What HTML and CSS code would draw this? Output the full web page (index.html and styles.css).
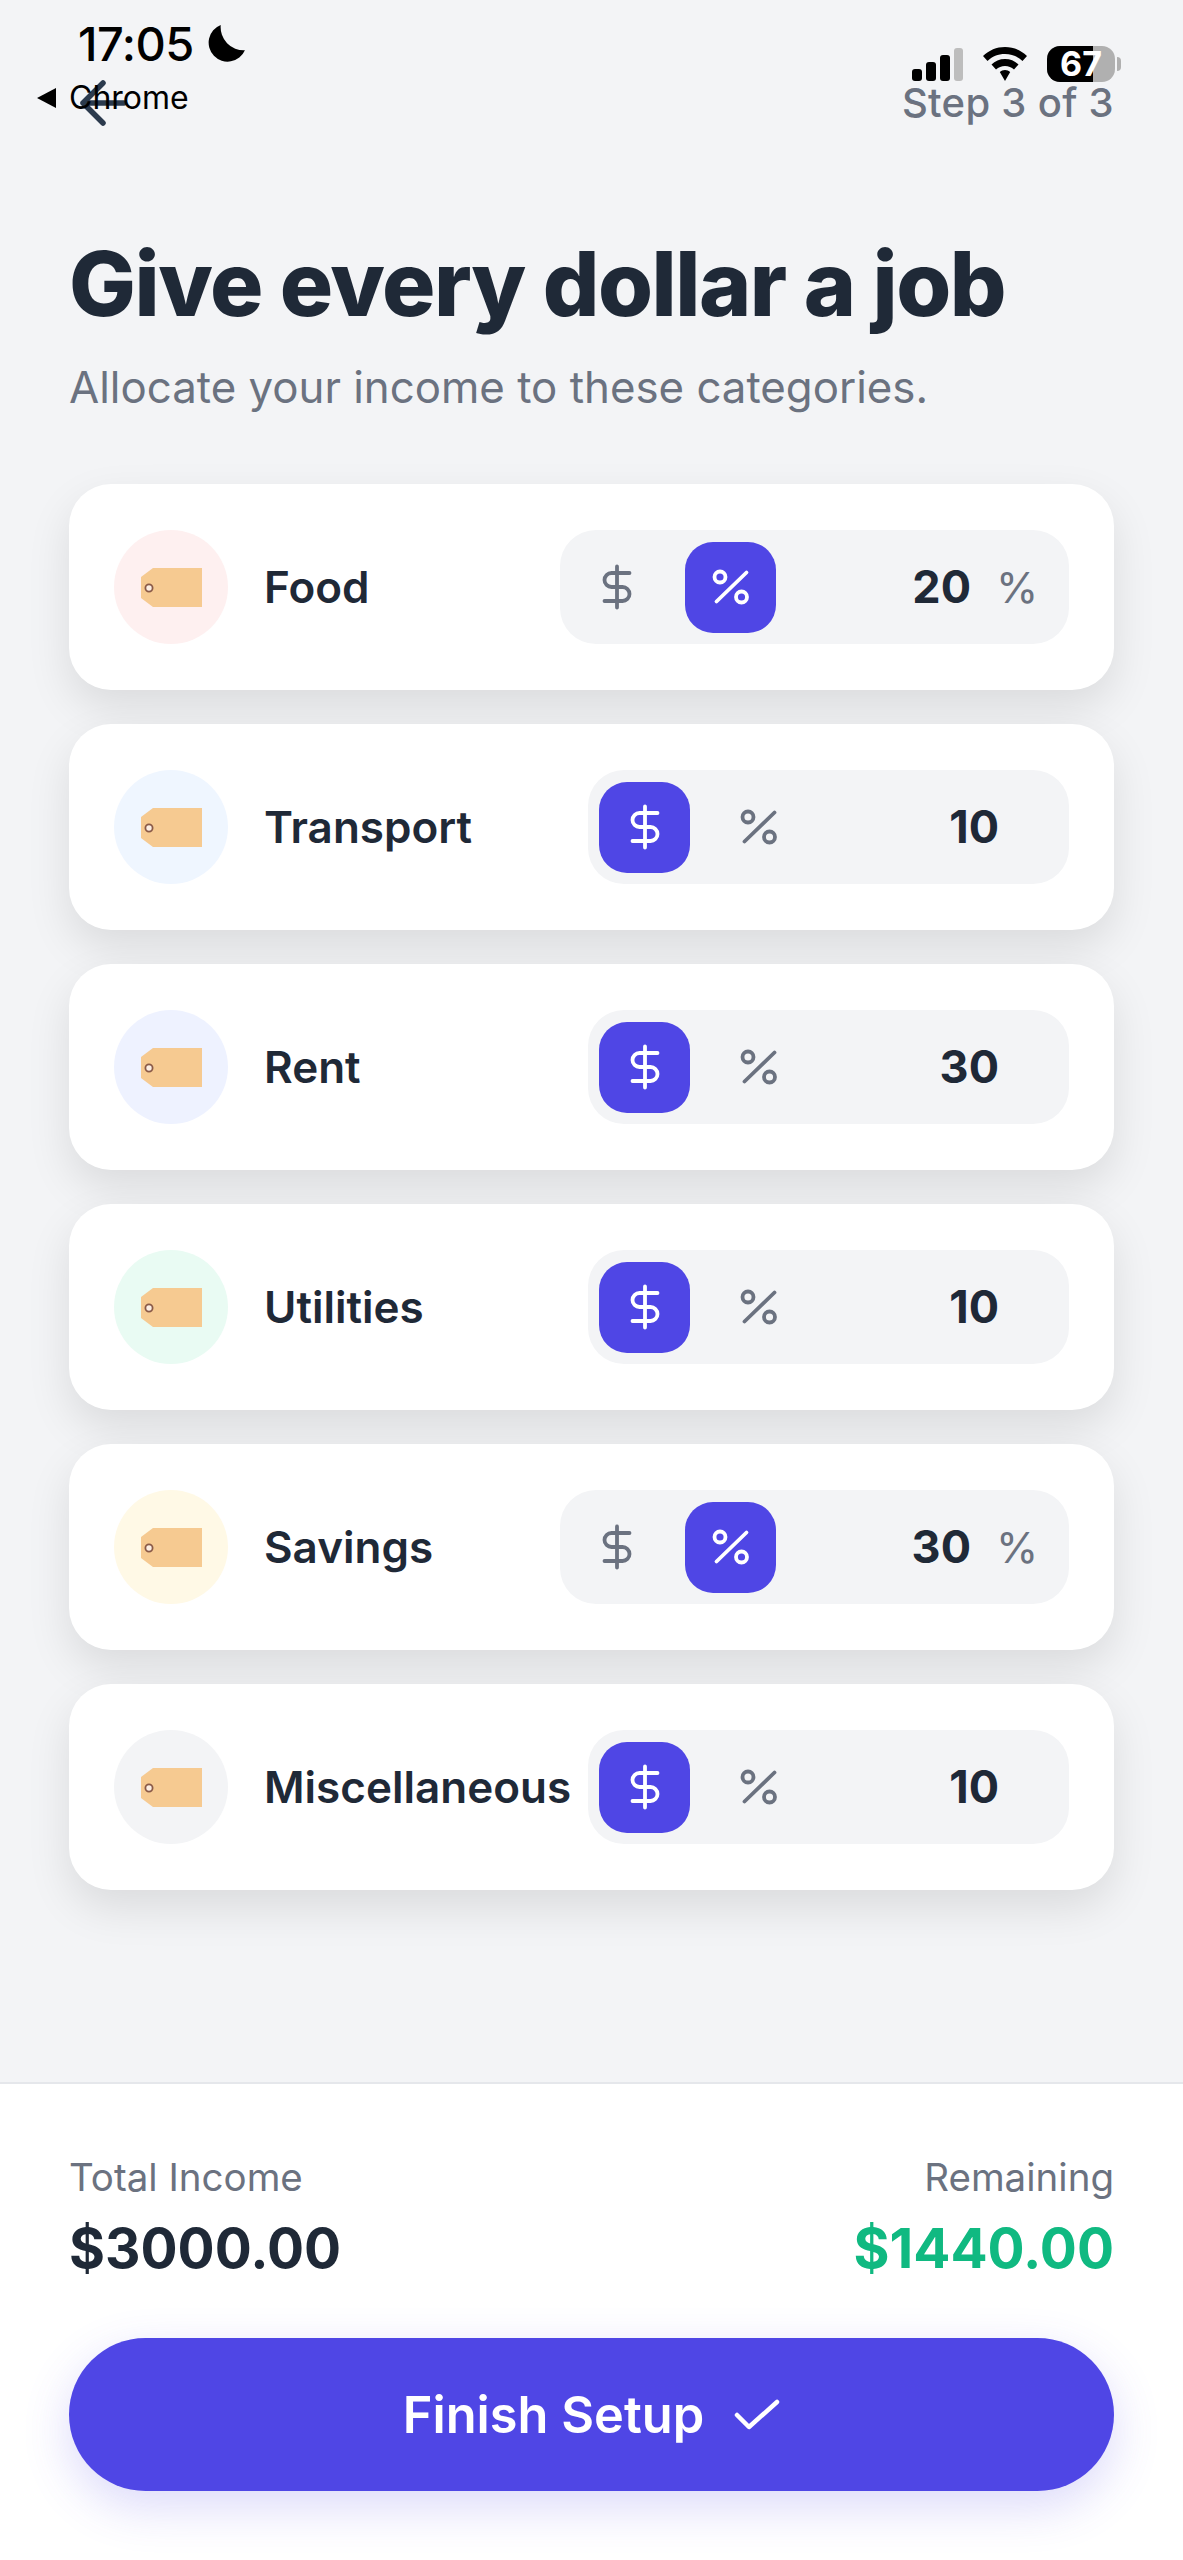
FILE: index.html
```html
<!DOCTYPE html>
<html lang="en">
<head>
<meta charset="utf-8">
<title>Give every dollar a job</title>
<link rel="stylesheet" href="styles.css">
</head>
<body>
<svg class="sprite" width="0" height="0" aria-hidden="true">
  <symbol id="i-dollar" viewBox="0 0 48 48"><path d="M24 3.500V44.500M36.500 10H18.500a7 7 0 0 0 0 14H29.500a7 7 0 0 1 0 14H11.500"/></symbol>
  <symbol id="i-percent" viewBox="0 0 48 48"><path d="M39.500 9.500L9.500 38.500"/><circle cx="13" cy="14" r="5.500"/><circle cx="34.500" cy="34" r="5.500"/></symbol>
  <symbol id="i-tag" viewBox="0 0 61 39"><path class="tag-body" d="M12 0H61V39H12L0 30V9Z"/><circle class="tag-hole" cx="8" cy="20" r="3.600"/></symbol>
</svg>
<div class="page">
  <div class="statusbar">
    <div class="status-left">
      <div class="clock"><span class="time">17:05</span>
        <svg class="moon" viewBox="0 0 38 38"><path d="M14 1A18 18 0 1 0 37 25A22 22 0 0 1 14 1Z"/></svg>
      </div>
      <div class="return"><span class="tri"></span><span class="return-label">Chrome</span></div>
    </div>
    <div class="status-right">
      <svg class="signal" viewBox="0 0 51 33"><rect x="0" y="21" width="10" height="12" rx="3"/><rect x="14" y="14" width="10" height="19" rx="3"/><rect x="28" y="7" width="10" height="26" rx="3"/><rect class="dim" x="42" y="0" width="9" height="33" rx="3"/></svg>
      <svg class="wifi" viewBox="0 0 44 34"><path d="M22 0C13.500 0 6 3.300 0 9L4.500 14C9 9.500 15 7 22 7S35 9.500 39.500 14L44 9C38 3.300 30.500 0 22 0ZM22 12C16.500 12 12 14 8.500 17.500L13 22.500C15.500 20.200 18.500 19 22 19S28.500 20.200 31 22.500L35.500 17.500C32 14 27.500 12 22 12ZM22 23C20 23 18.200 23.700 16.800 25L22 34L27.200 25C25.800 23.700 24 23 22 23Z"/></svg>
      <div class="battery"><span class="battery-level"></span><span class="battery-num">67</span></div>
    </div>
  </div>

  <main class="content">
    <header class="topbar">
      <svg class="back" viewBox="0 0 50 46"><path d="M46 23H5M25 3L5 23L25 43"/></svg>
      <span class="step">Step 3 of 3</span>
    </header>
    <h1 class="title">Give every dollar a job</h1>
    <p class="subtitle">Allocate your income to these categories.</p>

    <div class="list">
      <section class="card">
        <div class="circle red"><svg class="tag"><use href="#i-tag"/></svg></div>
        <div class="name">Food</div>
        <div class="pill has-suffix">
          <div class="seg"><svg class="glyph"><use href="#i-dollar"/></svg></div>
          <div class="seg on"><svg class="glyph"><use href="#i-percent"/></svg></div>
          <div class="value">20</div>
          <div class="suffix">%</div>
        </div>
      </section>
      <section class="card">
        <div class="circle blue"><svg class="tag"><use href="#i-tag"/></svg></div>
        <div class="name">Transport</div>
        <div class="pill">
          <div class="seg on"><svg class="glyph"><use href="#i-dollar"/></svg></div>
          <div class="seg"><svg class="glyph"><use href="#i-percent"/></svg></div>
          <div class="value">10</div>
        </div>
      </section>
      <section class="card">
        <div class="circle indigo"><svg class="tag"><use href="#i-tag"/></svg></div>
        <div class="name">Rent</div>
        <div class="pill">
          <div class="seg on"><svg class="glyph"><use href="#i-dollar"/></svg></div>
          <div class="seg"><svg class="glyph"><use href="#i-percent"/></svg></div>
          <div class="value">30</div>
        </div>
      </section>
      <section class="card">
        <div class="circle green"><svg class="tag"><use href="#i-tag"/></svg></div>
        <div class="name">Utilities</div>
        <div class="pill">
          <div class="seg on"><svg class="glyph"><use href="#i-dollar"/></svg></div>
          <div class="seg"><svg class="glyph"><use href="#i-percent"/></svg></div>
          <div class="value">10</div>
        </div>
      </section>
      <section class="card">
        <div class="circle yellow"><svg class="tag"><use href="#i-tag"/></svg></div>
        <div class="name">Savings</div>
        <div class="pill has-suffix">
          <div class="seg"><svg class="glyph"><use href="#i-dollar"/></svg></div>
          <div class="seg on"><svg class="glyph"><use href="#i-percent"/></svg></div>
          <div class="value">30</div>
          <div class="suffix">%</div>
        </div>
      </section>
      <section class="card">
        <div class="circle gray"><svg class="tag"><use href="#i-tag"/></svg></div>
        <div class="name">Miscellaneous</div>
        <div class="pill">
          <div class="seg on"><svg class="glyph"><use href="#i-dollar"/></svg></div>
          <div class="seg"><svg class="glyph"><use href="#i-percent"/></svg></div>
          <div class="value">10</div>
        </div>
      </section>
    </div>
  </main>

  <footer class="footer">
    <div class="totals">
      <div class="total">
        <div class="total-label">Total Income</div>
        <div class="total-amount">$3000.00</div>
      </div>
      <div class="total total-right">
        <div class="total-label">Remaining</div>
        <div class="total-amount positive">$1440.00</div>
      </div>
    </div>
    <button class="finish" type="button">
      <span>Finish Setup</span>
      <svg class="check" viewBox="0 0 46 32"><path d="M3 16L15 28L43 3"/></svg>
    </button>
  </footer>
</div>
</body>
</html>
```
FILE: styles.css
```css
* { box-sizing: border-box; }
html, body { margin: 0; padding: 0; }
body {
  font-family: Inter, "Noto Sans", sans-serif;
  background: #f3f4f6;
  color: #1f2937;
}
.sprite { position: absolute; }
.page {
  position: relative;
  min-height: 2560px;
  display: flex;
  flex-direction: column;
  overflow: hidden;
}

/* status bar overlays the app header */
.statusbar {
  position: absolute;
  top: 0; left: 0; right: 0;
  height: 125px;
  color: #000;
}
.status-left { position: absolute; left: 37px; top: 20px; }
.clock { display: flex; align-items: center; margin-left: 41px; height: 48px; gap: 12px; }
.time { font-size: 47px; font-weight: 500; line-height: 48px; letter-spacing: -0.500px; }
.moon { width: 40px; height: 40px; fill: #000; }
.return { display: flex; align-items: center; margin-top: 6px; height: 48px; gap: 13px; }
.tri { width: 0; height: 0; border-top: 10px solid transparent; border-bottom: 10px solid transparent; border-right: 19px solid #000; }
.return-label { font-size: 32px; line-height: 48px; }
.status-right { position: absolute; left: 912px; top: 46px; display: flex; align-items: flex-start; gap: 20px; }
.signal { width: 51px; height: 33px; margin-top: 2px; fill: #000; }
.signal .dim { fill: #bdbdbd; }
.wifi { width: 44px; height: 34px; margin-top: 1px; fill: #000; }
.battery {
  position: relative;
  width: 68px; height: 36px;
  border-radius: 13px;
  background: #b0b0b0;
  text-align: center;
}
.battery::after {
  content: "";
  position: absolute;
  left: 70px; top: 11px;
  width: 4px; height: 14px;
  border-radius: 0 4px 4px 0;
  background: #b0b0b0;
}
.battery-level {
  position: absolute;
  left: 0; top: 0; bottom: 0;
  width: 46px;
  background: #000;
  border-radius: 13px 0 0 13px;
}
.battery-num {
  position: relative;
  color: #fff;
  font-size: 34px;
  font-weight: 700;
  line-height: 36px;
}

/* content */
.content { flex: 1; padding: 79px 69px 0; }
.topbar { display: flex; justify-content: space-between; align-items: center; height: 48px; }
.back { width: 50px; height: 46px; margin-left: 9px; fill: none; stroke: #2b3a4d; stroke-width: 5.500; stroke-linecap: round; stroke-linejoin: round; }
.step { font-size: 40px; font-weight: 500; letter-spacing: 0.300px; color: #6b7280; line-height: 48px; }
.title {
  margin: 107px 0 0;
  font-size: 89px;
  font-weight: 800;
  line-height: 100px;
  letter-spacing: -1.500px;
  color: #1f2937;
}
.subtitle {
  margin: 26px 0 0;
  font-size: 43.800px;
  line-height: 56px;
  color: #6b7280;
}
.list { margin-top: 68px; display: flex; flex-direction: column; gap: 34px; }
.card {
  display: flex;
  align-items: center;
  height: 206px;
  padding: 0 45px;
  background: #fff;
  border-radius: 42px;
  box-shadow: 0 18px 44px rgba(0, 0, 0, 0.1);
}
.circle {
  flex: none;
  width: 114px; height: 114px;
  border-radius: 50%;
  display: flex;
  align-items: center;
  justify-content: center;
  margin-right: 36px;
}
.red { background: #fef0f0; }
.blue { background: #eff6ff; }
.indigo { background: #eef2ff; }
.green { background: #e9fbf3; }
.yellow { background: #fff9e6; }
.gray { background: #f3f4f6; }
.tag { width: 61px; height: 39px; }
.tag-body { fill: #f6ca91; }
.tag-hole { fill: #fbeee3; stroke: #8a5a48; stroke-width: 1.800; }
.name { font-size: 44px; font-weight: 600; line-height: 56px; white-space: nowrap; color: #1f2937; }

.pill {
  margin-left: auto;
  flex: none;
  display: flex;
  align-items: center;
  height: 114px;
  padding: 0 70px 0 11px;
  gap: 23px;
  background: #f3f4f6;
  border-radius: 36px;
}
.pill.has-suffix { padding-right: 36px; }
.seg {
  width: 91px; height: 91px;
  border-radius: 28px;
  display: flex;
  align-items: center;
  justify-content: center;
  color: #6b7280;
}
.seg.on { background: #4f46e5; color: #fff; }
.glyph { width: 48px; height: 48px; fill: none; stroke: currentColor; stroke-width: 3.800; stroke-linecap: round; stroke-linejoin: round; }
.value {
  width: 172px;
  text-align: right;
  font-size: 45px;
  font-weight: 700;
  line-height: 56px;
  color: #1f2937;
}
.suffix { width: 37px; margin-left: 2px; font-size: 43px; line-height: 56px; color: #6b7280; text-align: right; }

/* footer */
.footer {
  background: #fff;
  border-top: 2px solid #e5e7eb;
  padding: 68px 69px 69px;
}
.totals { display: flex; justify-content: space-between; }
.total-right { text-align: right; }
.total-label { font-size: 38.500px; line-height: 50px; color: #6b7280; }
.total-amount { margin-top: 11px; font-size: 55px; font-weight: 700; line-height: 70px; color: #1f2937; }
.total-amount.positive { color: #10b981; }
.finish {
  margin-top: 55px;
  width: 100%;
  height: 153px;
  border: 0;
  border-radius: 77px;
  background: #4f46e5;
  color: #fff;
  font: 600 50.500px/60px Inter, "Noto Sans", sans-serif;
  display: flex;
  align-items: center;
  justify-content: center;
  gap: 30px;
  box-shadow: 0 16px 48px rgba(79, 70, 229, 0.2);
}
.check { width: 46px; height: 32px; fill: none; stroke: #fff; stroke-width: 4.500; stroke-linecap: round; stroke-linejoin: round; }
```
